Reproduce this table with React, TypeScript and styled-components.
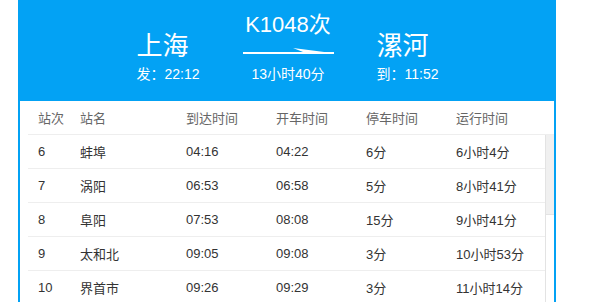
import * as React from "react";
import styled, { createGlobalStyle } from "styled-components";

const BLUE = "#03a2f4";

interface Stop {
  no: number;
  name: string;
  arrive: string;
  depart: string;
  stay: string;
  run: string;
}

const stops: Stop[] = [
  { no: 6, name: "蚌埠", arrive: "04:16", depart: "04:22", stay: "6分", run: "6小时4分" },
  { no: 7, name: "涡阳", arrive: "06:53", depart: "06:58", stay: "5分", run: "8小时41分" },
  { no: 8, name: "阜阳", arrive: "07:53", depart: "08:08", stay: "15分", run: "9小时41分" },
  { no: 9, name: "太和北", arrive: "09:05", depart: "09:08", stay: "3分", run: "10小时53分" },
  { no: 10, name: "界首市", arrive: "09:26", depart: "09:29", stay: "3分", run: "11小时14分" }
];

const columns = ["站次", "站名", "到达时间", "开车时间", "停车时间", "运行时间"];

const Arrow = () => (
  <ArrowSvg width="91" height="8" viewBox="0 0 91 8">
    <rect x="0" y="5" width="91" height="2" fill="#fff" />
    <polygon points="50,1 91,6.2 60,5" fill="#fff" />
  </ArrowSvg>
);

const App: React.FC = () => (
  <Page>
    <GlobalStyle />
    <Card>
      <Banner>
        <City>
          <CityName>上海</CityName>
          <Sub>发：22:12</Sub>
        </City>
        <Train>
          <TrainNo>K1048次</TrainNo>
          <Arrow />
          <Sub>13小时40分</Sub>
        </Train>
        <City>
          <CityName>漯河</CityName>
          <Sub>到：11:52</Sub>
        </City>
      </Banner>
      <Table>
        <HeadRow>
          {columns.map(c => (
            <Cell key={c}>{c}</Cell>
          ))}
        </HeadRow>
        <Body>
          <Rows>
            {stops.map(s => (
              <Row key={s.no}>
                <Cell>{s.no}</Cell>
                <Cell>{s.name}</Cell>
                <Cell>{s.arrive}</Cell>
                <Cell>{s.depart}</Cell>
                <Cell>{s.stay}</Cell>
                <Cell>{s.run}</Cell>
              </Row>
            ))}
          </Rows>
          <ScrollTrack>
            <ScrollThumb />
          </ScrollTrack>
        </Body>
      </Table>
    </Card>
  </Page>
);

const GlobalStyle = createGlobalStyle`
  body {
    margin: 0;
    background: #fff;
    font-family: "Liberation Sans", "Noto Sans CJK SC", sans-serif;
    overflow: hidden;
  }
`;

const Page = styled.div`
  padding-left: 18px;
`;

const Card = styled.div`
  width: 534px;
  border: 2px solid ${BLUE};
  border-top: none;
`;

const Banner = styled.div`
  height: 101px;
  box-sizing: border-box;
  background: ${BLUE};
  color: #fff;
  display: flex;
  justify-content: center;
  align-items: flex-end;
  gap: 43px;
  padding: 0 0 19px 2px;
`;

const City = styled.div`
  display: flex;
  flex-direction: column;
  width: 63px;
`;

const CityName = styled.div`
  font-size: 26px;
  line-height: 30px;
  margin-bottom: 5px;
`;

const Sub = styled.div`
  font-size: 14px;
  line-height: 16px;
  white-space: nowrap;
`;

const Train = styled.div`
  display: flex;
  flex-direction: column;
  align-items: center;
  width: 91px;
`;

const TrainNo = styled.div`
  font-size: 22px;
  line-height: 26px;
  white-space: nowrap;
`;

const ArrowSvg = styled.svg`
  display: block;
  margin: 9px 0 11px;
`;

const Table = styled.div`
  padding-left: 8px;
  font-size: 13px;
`;

const grid = `
  display: grid;
  grid-template-columns: 42px 106px 90px 90px 90px 1fr;
  height: 34px;
  box-sizing: border-box;
  border-bottom: 1px solid #eeeeee;
  align-items: center;
`;

const HeadRow = styled.div`
  ${grid}
  color: #666;
`;

const Body = styled.div`
  display: flex;
`;

const Rows = styled.div`
  flex: 1;
`;

const Row = styled.div`
  ${grid}
  color: #333;
`;

const Cell = styled.div`
  padding-left: 10px;
  white-space: nowrap;
`;

const ScrollTrack = styled.div`
  width: 8px;
  border-left: 1px solid #e3e3e3;
  background: #fff;
`;

const ScrollThumb = styled.div`
  height: 79px;
  background: #f0f0f0;
  border-bottom: 1px solid #e3e3e3;
`;

export default App;
